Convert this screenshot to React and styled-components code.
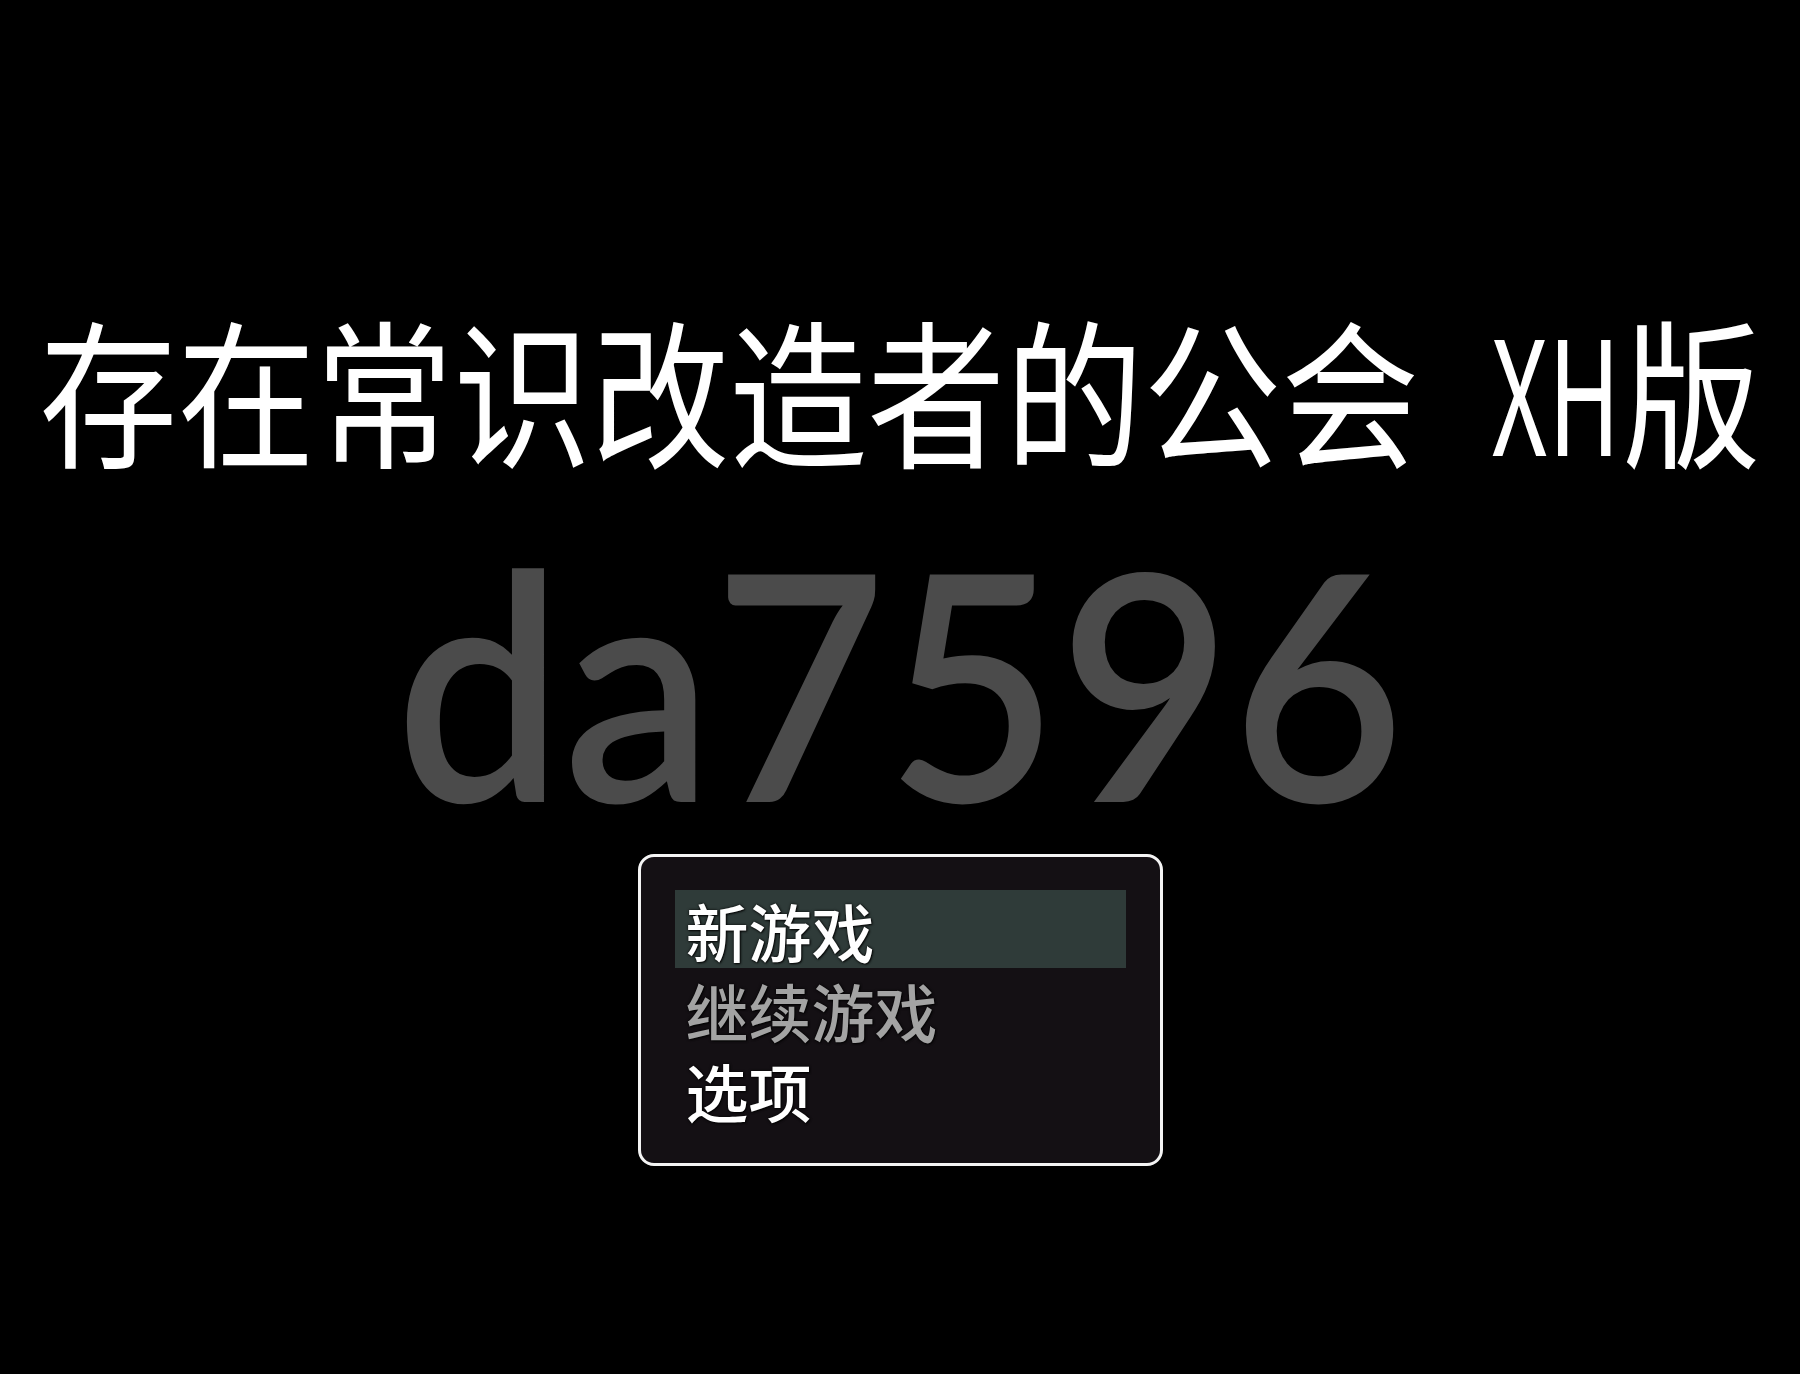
import React from 'react';
import styled, { createGlobalStyle } from 'styled-components';

const GlobalStyle = createGlobalStyle`
  html, body {
    margin: 0;
    padding: 0;
    background: #000;
    min-height: 100%;
  }
  #root {
    min-height: 1374px;
  }
`;

// title screen layout
const Screen = styled.div`
  display: flex;
  flex-direction: column;
  align-items: center;
  padding-top: 307px;
  height: 1374px;
  box-sizing: border-box;
  background: #000;
  overflow: hidden;
`;

const Title = styled.h1`
  margin: 0;
  height: 160px;
  line-height: 160px;
  font-family: "Noto Sans CJK SC", "Noto Sans", sans-serif;
  font-weight: 400;
  font-size: 138px;
  color: #fff;
  white-space: nowrap;
  transform: scaleY(1.15);
`;

const Version = styled.span`
  margin-left: 72px;
`;

// the latin part of the title is drawn narrow
const Narrow = styled.span`
  display: inline-block;
  transform: scaleX(0.72);
  transform-origin: left center;
  margin-right: -48px;
`;

const Code = styled.div`
  margin-top: 64px;
  height: 298px;
  line-height: 298px;
  font-family: "Lato Semibold", "Lato Medium", Lato, "Liberation Sans", sans-serif;
  font-weight: 600;
  font-size: 298px;
  color: #4b4b4b;
  white-space: nowrap;
  transform: scaleY(1.06);
`;

const MenuWindow = styled.div`
  margin-top: 25px;
  width: 525px;
  box-sizing: border-box;
  padding: 33px 34px 35px;
  border: 3px solid #f4f4f4;
  border-radius: 16px;
  background: #141014;
  display: flex;
  flex-direction: column;
  gap: 2px;
`;

const MenuItem = styled.div`
  height: 78px;
  display: flex;
  align-items: center;
  padding-left: 11px;
  font-family: "Noto Sans CJK SC", "Noto Sans", sans-serif;
  font-weight: 500;
  font-size: 63px;
  line-height: 1;
  color: ${p => (p.disabled ? '#a3a3a3' : '#ffffff')};
  background: ${p => (p.selected ? '#2f3b39' : 'transparent')};
  text-shadow: 0 0 3px rgba(0, 0, 0, 0.9), 1px 1px 2px rgba(0, 0, 0, 0.8);
`;

const items = [
  { label: '新游戏', selected: true },
  { label: '继续游戏', disabled: true },
  { label: '选项' },
];

export default function App() {
  return (
    <>
      <GlobalStyle />
      <Screen>
        <Title>
          存在常识改造者的公会
          <Version>
            <Narrow>XH</Narrow>版
          </Version>
        </Title>
        <Code>da7596</Code>
        <MenuWindow>
          {items.map(item => (
            <MenuItem key={item.label} selected={item.selected} disabled={item.disabled}>
              {item.label}
            </MenuItem>
          ))}
        </MenuWindow>
      </Screen>
    </>
  );
}
